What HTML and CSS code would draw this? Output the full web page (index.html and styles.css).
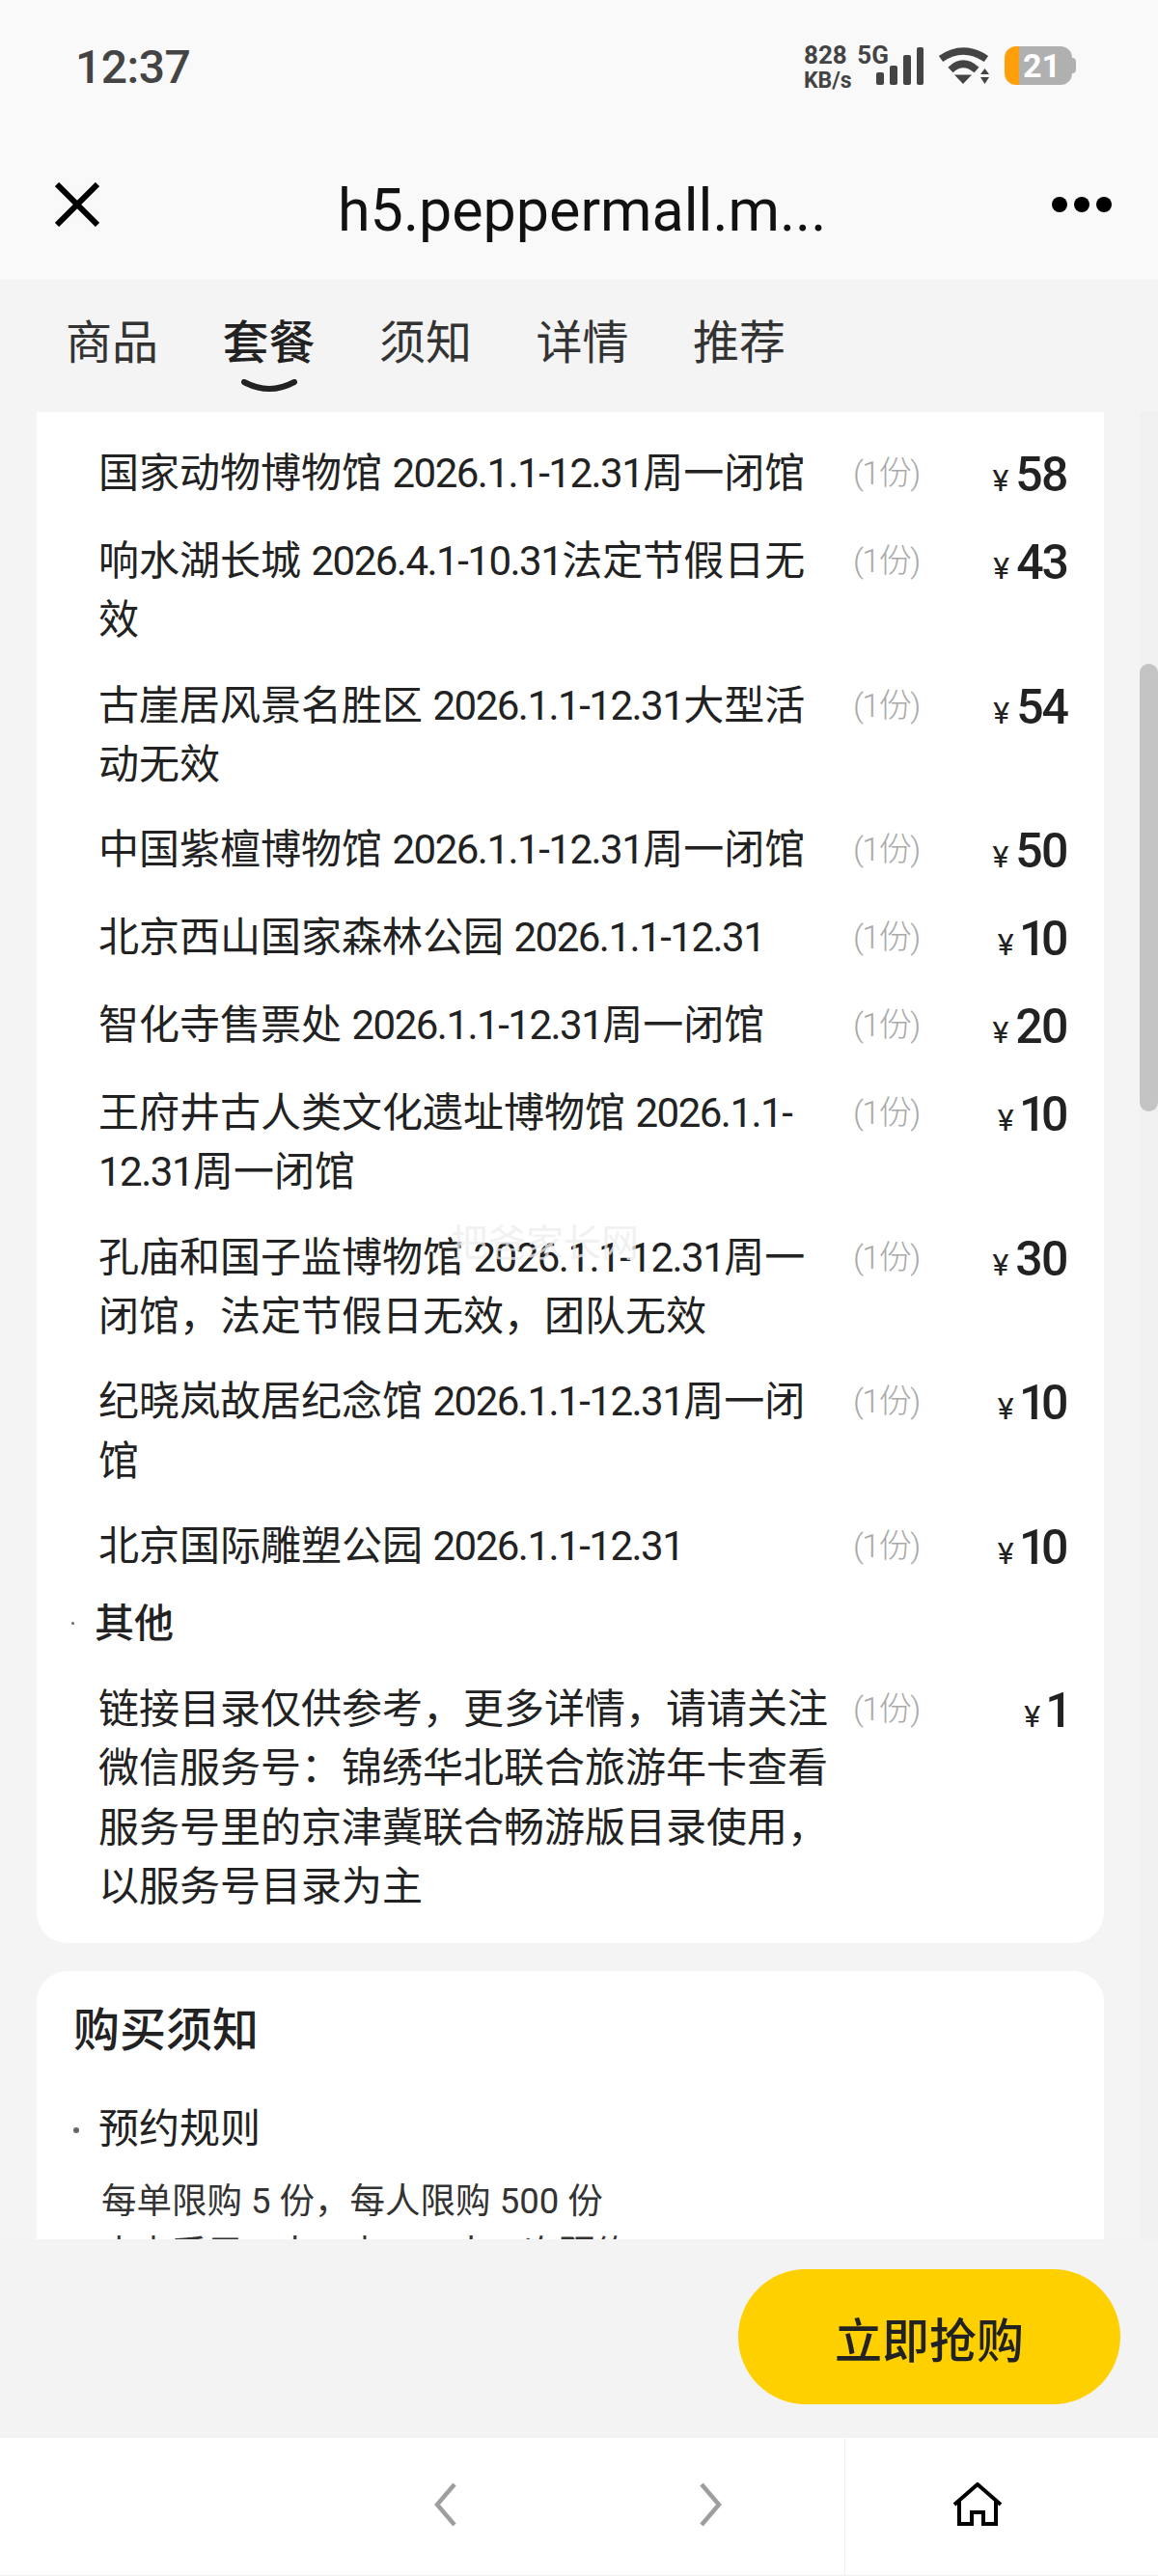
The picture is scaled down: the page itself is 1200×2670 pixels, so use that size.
FILE: index.html
```html
<!DOCTYPE html>
<html lang="zh-CN">
<head>
<meta charset="utf-8">
<title>套餐</title>
<link rel="stylesheet" href="styles.css">
</head>
<body>
<div class="page">
  <div class="status">
    <div class="time">12:37</div>
    <div class="status-right">
      <div class="net"><div class="net-top">828 <span class="net-5g">5G</span></div><div class="net-bot">KB/s</div></div>
      <svg class="signal" width="49" height="39" viewBox="0 0 49 39"><rect x="0" y="26" width="8" height="13" rx="2"/><rect x="14" y="19" width="8" height="20" rx="2"/><rect x="28" y="8" width="8" height="31" rx="2"/><rect x="42" y="0" width="7" height="39" rx="2"/></svg>
      <svg class="wifi" width="54" height="38" viewBox="0 0 54 38"><path class="wifi-arc" d="M3 12Q26 -4 50 12"/><path class="wifi-arc" d="M13 23.500Q26 11 40 23.500"/><path d="M17 28.500L35 28.500L26 38Z"/><path d="M44 28L53 28L48.500 22ZM44 31L53 31L48.500 38Z"/></svg>
      <div class="battery"><div class="battery-body"><div class="battery-level"></div><div class="battery-rest">21</div></div></div>
    </div>
  </div>

  <div class="header">
    <svg class="close" width="46" height="46" viewBox="0 0 46 46"><path d="M2 2L44 44M44 2L2 44"/></svg>
    <div class="title">h5.peppermall.m...</div>
    <div class="dots"><span class="dot"></span><span class="dot"></span><span class="dot"></span></div>
  </div>

  <div class="tabs">
    <div class="tab">商品</div>
    <div class="tab tab-active">套餐<svg class="smile" width="58" height="14" viewBox="0 0 58 14"><path d="M3 3Q29 17 55 3"/></svg></div>
    <div class="tab">须知</div>
    <div class="tab">详情</div>
    <div class="tab">推荐</div>
  </div>

  <div class="main">
    <div class="card card-list">
      <div class="row"><div class="name">国家动物博物馆 <span class="d">2026.1.1-12.31</span>周一闭馆</div><div class="qty">(1份)</div><div class="price"><span class="yen">¥</span>58</div></div>
      <div class="row"><div class="name">响水湖长城 <span class="d">2026.4.1-10.31</span>法定节假日无效</div><div class="qty">(1份)</div><div class="price"><span class="yen">¥</span>43</div></div>
      <div class="row"><div class="name">古崖居风景名胜区 <span class="d">2026.1.1-12.31</span>大型活动无效</div><div class="qty">(1份)</div><div class="price"><span class="yen">¥</span>54</div></div>
      <div class="row"><div class="name">中国紫檀博物馆 <span class="d">2026.1.1-12.31</span>周一闭馆</div><div class="qty">(1份)</div><div class="price"><span class="yen">¥</span>50</div></div>
      <div class="row"><div class="name">北京西山国家森林公园 <span class="d">2026.1.1-12.31</span></div><div class="qty">(1份)</div><div class="price"><span class="yen">¥</span>10</div></div>
      <div class="row"><div class="name">智化寺售票处 <span class="d">2026.1.1-12.31</span>周一闭馆</div><div class="qty">(1份)</div><div class="price"><span class="yen">¥</span>20</div></div>
      <div class="row"><div class="name">王府井古人类文化遗址博物馆 <span class="d">2026.1.1-12.31</span>周一闭馆</div><div class="qty">(1份)</div><div class="price"><span class="yen">¥</span>10</div></div>
      <div class="row"><div class="name">孔庙和国子监博物馆 <span class="d">2026.1.1-12.31</span>周一闭馆&#xFF0C;法定节假日无效&#xFF0C;团队无效</div><div class="qty">(1份)</div><div class="price"><span class="yen">¥</span>30</div></div>
      <div class="row"><div class="name">纪晓岚故居纪念馆 <span class="d">2026.1.1-12.31</span>周一闭馆</div><div class="qty">(1份)</div><div class="price"><span class="yen">¥</span>10</div></div>
      <div class="row"><div class="name">北京国际雕塑公园 <span class="d">2026.1.1-12.31</span></div><div class="qty">(1份)</div><div class="price"><span class="yen">¥</span>10</div></div>
      <div class="group">其他</div>
      <div class="row"><div class="name">链接目录仅供参考&#xFF0C;更多详情&#xFF0C;请请关注微信服务号&#xFF1A;锦绣华北联合旅游年卡查看服务号里的京津冀联合畅游版目录使用&#xFF0C;以服务号目录为主</div><div class="qty">(1份)</div><div class="price"><span class="yen">¥</span>1</div></div>
    </div>

    <div class="card card-notice">
      <div class="notice-title">购买须知</div>
      <div class="notice-head">预约规则</div>
      <div class="notice-text">每单限购 5 份&#xFF0C;每人限购 500 份</div>
      <div class="notice-text">本卡采用一人一卡&#xFF0C;一人一次预约</div>
    </div>

    <div class="watermark">把爸家长网</div>
    <div class="scroll-track"><div class="scroll-thumb"></div></div>
  </div>

  <div class="action">
    <div class="buy">立即抢购</div>
  </div>

  <div class="nav">
    <div class="nav-arrows">
      <svg class="chev" width="24" height="46" viewBox="0 0 24 46"><path d="M21 2L3 23L21 44"/></svg>
      <svg class="chev" width="24" height="46" viewBox="0 0 24 46"><path d="M3 2L21 23L3 44"/></svg>
    </div>
    <div class="nav-home">
      <svg class="home" width="52" height="46" viewBox="0 0 52 46"><path d="M2 23L26 2L50 23M7 18V43H20V31H32V43H45V18"/></svg>
    </div>
  </div>
</div>
</body>
</html>
```
FILE: styles.css
```css
* { box-sizing: border-box; }
html, body { margin: 0; padding: 0; }
body {
  width: 1200px;
  height: 2670px;
  overflow: hidden;
  font-family: Roboto, "Noto Sans CJK SC", sans-serif;
  color: #222;
  background: #f4f4f4;
}
.page { display: flex; flex-direction: column; height: 2670px; }

.status {
  height: 160px;
  flex: none;
  background: #f9f9f9;
  display: flex;
  justify-content: space-between;
  align-items: flex-start;
  padding: 48px 85px 0 78px;
}
.time { font-size: 48px; line-height: 44px; font-weight: 500; color: #444; letter-spacing: -0.500px; }
.status-right { display: flex; align-items: center; color: #444; height: 40px; }
.net { width: 75px; white-space: nowrap; font-weight: 700; line-height: 1; margin-top: 0; }
.net-top { font-size: 26px; height: 28px; }
.net-5g { margin-left: 4px; }
.net-bot { font-size: 23px; height: 20px; }
.signal { fill: #444; display: block; }
.wifi { fill: #444; display: block; margin-left: 15px; }
.wifi-arc { fill: none; stroke: #444; stroke-width: 7.500; }
.battery { position: relative; margin-left: 15px; width: 74px; height: 40px; }
.battery::after {
  content: "";
  position: absolute;
  right: 0;
  top: 12px;
  width: 5px;
  height: 16px;
  border-radius: 0 4px 4px 0;
  background: #b0b0b0;
}
.battery-body { display: flex; width: 70px; height: 40px; border-radius: 12px; overflow: hidden; }
.battery-level { width: 15px; background: #ff9f0a; }
.battery-rest {
  flex: 1;
  background: #b0b0b0;
  color: #fff;
  font-size: 34px;
  font-weight: 700;
  line-height: 40px;
  padding-left: 4px;
}

.header {
  height: 130px;
  flex: none;
  background: #f9f9f9;
  display: flex;
  align-items: flex-start;
  padding: 29px 48px 0 57px;
}
.close { fill: none; stroke: #000; stroke-width: 6; display: block; }
.title {
  margin-left: 247px;
  width: 503px;
  overflow: hidden;
  white-space: nowrap;
  font-size: 61px;
  line-height: 48px;
  height: 70px;
  padding-top: 5px;
  color: #111;
}
.dots { margin-left: auto; display: flex; gap: 7px; padding-top: 15px; }
.dot { width: 16px; height: 16px; border-radius: 50%; background: #000; }

.tabs {
  height: 137px;
  flex: none;
  background: #f4f4f4;
  display: flex;
  gap: 66.500px;
  padding: 36px 0 0 68px;
}
.tab { font-size: 48px; line-height: 60px; width: 96px; display: flex; flex-direction: column; align-items: center; color: #333; }
.tab-active { font-weight: 500; color: #222; }
.smile { fill: none; stroke: #222; stroke-width: 6; stroke-linecap: round; margin-top: 7px; flex: none; }

.main { position: relative; flex: 1; min-height: 0; overflow: hidden; padding: 0 56px 0 38px; background: #f4f4f4; }
.card { background: #fff; width: 1106px; }
.card-list {
  border-radius: 0 0 32px 32px;
  padding: 33px 38px 27px 64px;
  display: flex;
  flex-direction: column;
  gap: 26.800px;
}
.row { display: flex; align-items: flex-start; }
.name { width: 782px; flex: none; font-size: 42px; line-height: 61.500px; color: #222; padding-right: 14px; }
.d { letter-spacing: -1.500px; }
.qty { width: 120px; flex: none; font-size: 34px; line-height: 61.500px; color: #aaa; font-weight: 300; letter-spacing: -1.500px; }
.price { flex: 1; height: 64px; text-align: right; font-size: 50px; line-height: 64px; font-weight: 500; color: #222; white-space: nowrap; letter-spacing: -2px; font-variant-numeric: proportional-nums; }
.yen { font-size: 32px; line-height: 1; font-weight: 400; margin-right: 7px; letter-spacing: 0; }
.group { position: relative; margin: -11px 0 0 -4px; font-size: 41px; line-height: 62px; font-weight: 500; }
.group::before {
  content: "";
  position: absolute;
  left: -24px;
  top: 29px;
  width: 3px;
  height: 3px;
  border-radius: 50%;
  background: #666;
}
.card-notice { margin-top: 29px; border-radius: 32px 32px 0 0; padding: 32px 38px 0 38px; }
.notice-title { font-size: 48px; line-height: 60px; font-weight: 500; color: #222; }
.notice-head { position: relative; margin-top: 41px; padding-left: 26px; font-size: 42px; line-height: 62px; }
.notice-head::before {
  content: "";
  position: absolute;
  left: 0;
  top: 29px;
  width: 6px;
  height: 6px;
  border-radius: 50%;
  background: #666;
}
.notice-text { margin-left: 29px; font-size: 36.500px; line-height: 54px; color: #333; white-space: nowrap; }
.notice-head + .notice-text { margin-top: 17px; }

.watermark {
  position: absolute;
  left: 467px;
  top: 834px;
  font-size: 39px;
  line-height: 56px;
  color: rgba(238, 238, 238, 0.8);
  white-space: nowrap;
}
.scroll-track { position: absolute; top: 0; right: 0; bottom: 0; width: 19px; background: #f0f0f0; }
.scroll-thumb { position: absolute; top: 261px; left: 0; width: 19px; height: 464px; border-radius: 10px; background: #c4c4c4; }

.action {
  height: 206px;
  flex: none;
  background: #f3f3f3;
  display: flex;
  justify-content: flex-end;
  padding: 31px 39px 0 0;
}
.buy {
  width: 396px;
  height: 140px;
  border-radius: 70px;
  background: #ffd000;
  display: flex;
  align-items: center;
  justify-content: center;
  font-size: 49px;
  font-weight: 500;
  color: #222;
}

.nav { height: 143px; flex: none; background: #fff; display: flex; border-bottom: 1px solid #eee; }
.nav-arrows { width: 876px; display: flex; gap: 250px; padding: 46px 0 0 450px; border-right: 1px solid #eee; }
.chev { fill: none; stroke: #9e9e9e; stroke-width: 4.500; display: block; }
.nav-home { flex: 1; padding: 46px 0 0 111px; }
.home { fill: none; stroke: #000; stroke-width: 4; display: block; }
```
